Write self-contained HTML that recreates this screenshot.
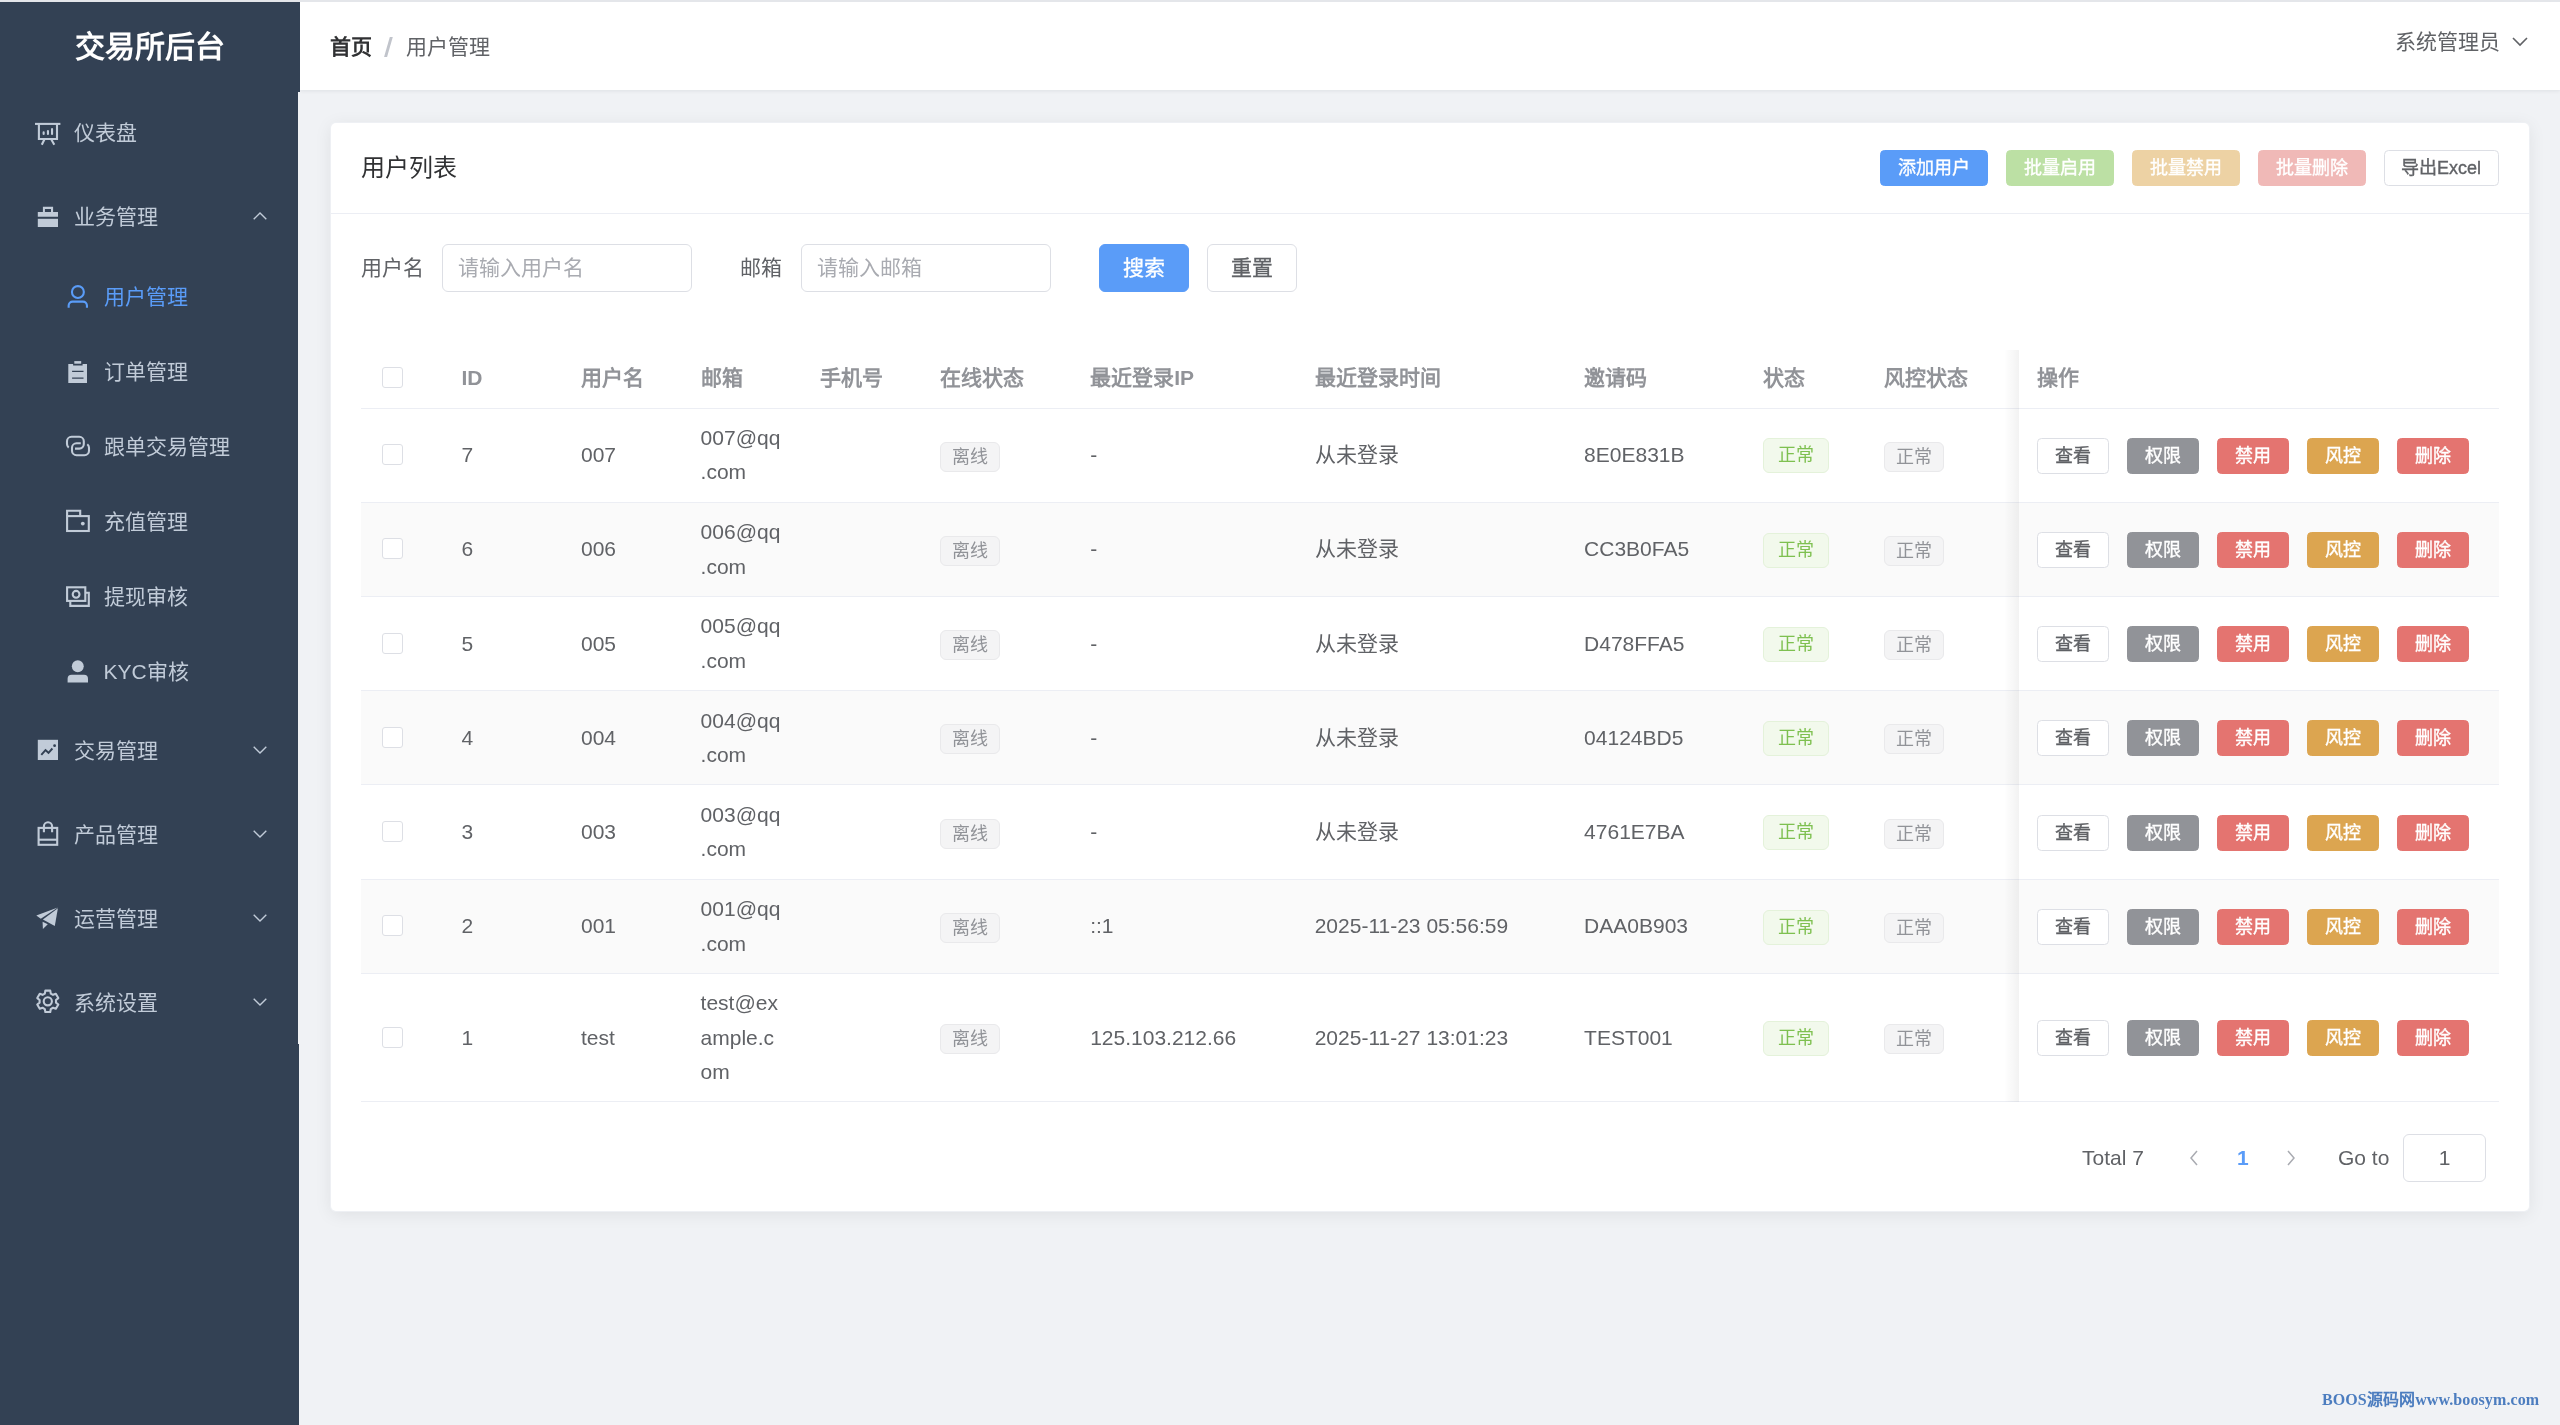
<!DOCTYPE html>
<html lang="zh-CN"><head><meta charset="utf-8"><title>用户管理</title>
<style>
*{box-sizing:border-box;margin:0;padding:0}
html,body{width:2560px;height:1425px;overflow:hidden}
.header,.side,.card,.wm{will-change:transform}
body{background:#f0f2f5;font-family:"Liberation Sans",sans-serif;position:relative;color:#606266;-webkit-font-smoothing:antialiased}
.topline{position:absolute;left:0;top:0;width:2560px;height:2px;background:#e4e6ea;z-index:50}
.side{position:absolute;left:0;top:0;width:298px;height:1044px;background:#334154;z-index:5}
.side-below{position:absolute;left:0;top:1044px;width:299px;height:381px;background:#334154;z-index:5}
.logo{position:absolute;left:0;top:2px;width:300px;height:90px;line-height:90px;text-align:center;color:#ffffff;font-size:30px;font-weight:bold;background:#334154}
.mi{position:absolute;left:0;width:298px;color:#c1cbd8;font-size:21px;display:flex;align-items:center;padding-left:30px}
.mi.child{padding-left:60px}
.mi.active{color:#5a9cf8}
.mi .mt{position:relative;top:-1px}
.mi .ico{width:36px;height:27px;position:relative;margin-right:7.5px;flex:none}
.mi .ico svg{position:absolute;left:0;top:-4.5px}
.mi .arr{position:absolute;left:252.5px;top:50%;margin-top:-4px}
.header{position:absolute;left:300px;top:0;width:2260px;height:90px;background:#ffffff;box-shadow:0 1px 4px rgba(4,21,39,.08);z-index:3}
.bc{position:absolute;left:30px;top:1.5px;height:90px;line-height:90px;font-size:21px}
.bc1{color:#303133;font-weight:bold}
.bcsep{display:inline-block;width:3px;height:19.5px;background:#c1c4cb;margin:0 16px 0 15px;transform:skewX(-16deg);vertical-align:middle;position:relative;top:-1.5px}
.bc2{color:#606266}
.user{position:absolute;right:32px;top:0;height:84px;line-height:84px;font-size:21px;color:#606266;display:flex;align-items:center}
.user svg{margin-left:12px}
.card{position:absolute;left:331px;top:122.5px;width:2197.5px;height:1088px;background:#ffffff;border-radius:5px;box-shadow:0 0 0 1px #eef0f4,0 3px 18px rgba(0,0,0,.08)}
.card-h{position:absolute;left:0;top:0;width:100%;height:91px;border-bottom:1px solid #eceef4}
.title{position:absolute;left:30px;top:0;line-height:90px;font-size:24px;color:#303133}
.hbtns{position:absolute;right:30px;top:26.5px;height:36px;display:flex}
.hb{-webkit-text-stroke:0.35px currentColor;display:inline-block;height:36px;line-height:34px;padding:0 0;width:108px;text-align:center;font-size:18px;border-radius:4.5px;border:1px solid transparent;color:#ffffff;margin-left:18px}
.hb-p{background:#5a9cf8;border-color:#5a9cf8}
.hb-s{background:#bce0a4;border-color:#bce0a4}
.hb-w{background:#edd2a4;border-color:#edd2a4}
.hb-d{background:#f0b9b7;border-color:#f0b9b7}
.hb-def{background:#ffffff;border-color:#dddfe5;color:#606266;width:115px}
.form{position:absolute;left:0;top:121px;width:100%;height:48px}
.lbl{position:absolute;top:0;line-height:48px;font-size:21px;color:#606266}
.inp{position:absolute;top:0;height:48px;border:1px solid #dddfe5;border-radius:6px;padding-left:14.5px;line-height:46px;font-size:21px;color:#a9abb1}
.sbtn{-webkit-text-stroke:0.35px currentColor;position:absolute;top:0;height:48px;width:90px;line-height:46px;text-align:center;font-size:21px;border-radius:6px;border:1px solid #dddfe5}
.sbtn-p{background:#5a9cf8;border-color:#5a9cf8;color:#ffffff}
.sbtn-def{background:#ffffff;color:#606266}
.table{position:absolute;left:30px;top:226.5px;width:2137.5px}
.row{position:absolute;left:0;width:2137.5px;border-bottom:1px solid #eceef4;background:#ffffff}
.row.stripe{background:#fafafa}
.row.head{color:#919398;font-weight:bold}
.c{position:absolute;top:0;height:100%;display:flex;align-items:center;padding-top:0.75px}
.row.head .c{padding-top:0}
.cell{padding:0 18px;line-height:34.5px;font-size:21px;white-space:nowrap}
.cell.sel{padding-left:21px}
.cb{display:inline-block;width:21px;height:21px;border:1px solid #dddfe5;border-radius:3px;background:#ffffff;vertical-align:middle;position:relative;top:-2px}
.tag{display:inline-block;font-size:18px;border:1px solid;border-radius:6px;text-align:center;vertical-align:middle}
.tag-sm{height:30px;line-height:28px;padding:0 11px}
.tag-success{height:35px;line-height:33px;padding:0 13.8px;color:#7ec050;background:#f2f9ec;border-color:#e4f2da}
.tag-info{color:#919398;background:#f4f4f5;border-color:#e9e9eb}
.btn{display:inline-block;width:72px;height:36px;line-height:34px;text-align:center;font-size:18px;border-radius:4.5px;border:1px solid;margin-right:18px;vertical-align:middle;-webkit-text-stroke:0.35px currentColor}
.b-def{background:#ffffff;border-color:#dddfe5;color:#606266}
.b-info{background:#919398;border-color:#919398;color:#ffffff}
.b-danger{background:#e47470;border-color:#e47470;color:#ffffff}
.b-warn{background:#dca550;border-color:#dca550;color:#ffffff}
.fixshadow{position:absolute;top:0;width:15px;background:linear-gradient(to right,rgba(0,0,0,0),rgba(0,0,0,.05))}
.pager{position:absolute;left:0;top:1010.5px;width:100%;height:48px}
.total{position:absolute;left:1751px;line-height:48px;font-size:21px;color:#606266}
.pv{position:absolute;left:1858px;top:16px}
.nx{position:absolute;left:1955px;top:16px}
.pnum{position:absolute;left:1906px;line-height:48px;font-size:21px;color:#5a9cf8;font-weight:bold}
.goto{position:absolute;left:2007px;line-height:48px;font-size:21px;color:#606266}
.ginp{position:absolute;left:2072px;top:0;width:83px;height:48px;border:1px solid #dddfe5;border-radius:6px;text-align:center;line-height:46px;font-size:21px;color:#606266}
.wm{position:absolute;left:2322px;top:1385.5px;font-family:"Liberation Serif",serif;font-weight:bold;font-size:16px;color:#4c7dbf;letter-spacing:0.1px}

</style></head><body>
<div class="topline"></div>
<div class="side">
  <div class="logo">交易所后台</div>
  <div class="mi" style="top:90px;height:84px"><span class="ico"><svg width="36" height="36" viewBox="0 0 36 36"><g fill="none" stroke="#c1cbd8" stroke-width="2.1"><path d="M5 9.9H30.4"/><path d="M8.9 9.9V25H27V9.9"/><path d="M14.5 25.3L11.8 30.8M21.2 25.3L24.3 30.8"/></g><g stroke="#c1cbd8" stroke-width="2.1" stroke-linecap="round"><path d="M13.65 18.25V19.95M17.95 16.95V19.95M22.05 15.15V19.95"/></g></svg></span><span class="mt">仪表盘</span></div><div class="mi" style="top:174px;height:84px"><span class="ico"><svg width="36" height="36" viewBox="0 0 36 36"><path fill="#c1cbd8" fill-rule="evenodd" d="M12.9 8.8H23.1V14H28V18.8H7.8V14H12.9ZM14.9 11.1V14H21V11.1Z"/><rect x="7.8" y="20.8" width="20.2" height="8.2" fill="#c1cbd8"/></svg></span><span class="mt">业务管理</span><svg class="arr" viewBox="0 0 14 8" width="14" height="8"><path d="M0.7 7.3L7 1l6.3 6.3" fill="none" stroke="#c1cbd8" stroke-width="1.4"/></svg></div><div class="mi child active" style="top:258px;height:75px"><span class="ico"><svg width="36" height="36" viewBox="0 0 36 36"><g fill="none" stroke="#5a9cf8" stroke-width="2.1"><circle cx="17.9" cy="14.05" r="5.95"/><path d="M8.65 29.8V27.6a4 4 0 0 1 4-4H22.95a4 4 0 0 1 4 4V29.8"/></g></svg></span><span class="mt">用户管理</span></div><div class="mi child" style="top:333px;height:75px"><span class="ico"><svg width="36" height="36" viewBox="0 0 36 36"><path fill="#c1cbd8" d="M14.3 8.1H21.2V10.7H14.3Z"/><path fill="#c1cbd8" fill-rule="evenodd" d="M8.3 10.9H13.1V12.4H22.6V10.9H27V29.9H8.3ZM12.1 17.7V19H23.5V17.7ZM12.1 24.4V25.8H23.5V24.4Z"/></svg></span><span class="mt">订单管理</span></div><div class="mi child" style="top:408px;height:75px"><span class="ico"><svg width="36" height="36" viewBox="0 0 36 36"><g fill="none" stroke="#c1cbd8" stroke-width="2.1"><path d="M8.7 19.6A4.5 4.5 0 0 1 7 16.1V13.3A4.5 4.5 0 0 1 11.5 8.8H19.3A4.5 4.5 0 0 1 23.8 13.3V16.1A4.5 4.5 0 0 1 19.3 20.6H15"/><path d="M20.8 15.3H16.5A4.5 4.5 0 0 0 12 19.8V22.7A4.5 4.5 0 0 0 16.5 27.2H24.5A4.5 4.5 0 0 0 29 22.7V19.8A4.5 4.5 0 0 0 27.3 16.3"/></g></svg></span><span class="mt">跟单交易管理</span></div><div class="mi child" style="top:483px;height:75px"><span class="ico"><svg width="36" height="36" viewBox="0 0 36 36"><g fill="none" stroke="#c1cbd8" stroke-width="2.1"><path d="M7.1 13.1V7.8H20.2V13.1"/><rect x="7.1" y="13.1" width="21.7" height="14.9"/></g><circle cx="22.8" cy="20.6" r="1.9" fill="#c1cbd8"/></svg></span><span class="mt">充值管理</span></div><div class="mi child" style="top:558px;height:75px"><span class="ico"><svg width="36" height="36" viewBox="0 0 36 36"><g fill="none" stroke="#c1cbd8" stroke-width="2.1"><rect x="7.1" y="9.3" width="18.2" height="13.6"/><circle cx="16.1" cy="16.3" r="3.4"/><path d="M10.3 22.9V27.9H28.8V14.8H25.3"/></g></svg></span><span class="mt">提现审核</span></div><div class="mi child" style="top:633px;height:75px"><span class="ico"><svg width="36" height="36" viewBox="0 0 36 36"><circle cx="17.8" cy="13.25" r="5.95" fill="#c1cbd8"/><path fill="#c1cbd8" d="M7.6 29.6V25.7a4 4 0 0 1 4-4H24a4 4 0 0 1 4 4V29.6Z"/></svg></span><span class="mt">KYC审核</span></div><div class="mi" style="top:708px;height:84px"><span class="ico"><svg width="36" height="36" viewBox="0 0 36 36"><rect x="7.8" y="7.8" width="20.2" height="20.2" fill="#c1cbd8"/><path d="M11.3 22.8L15.5 18L18.5 20.8L22.4 16.5" fill="none" stroke="#334154" stroke-width="1.9"/><circle cx="24.6" cy="13.7" r="1.4" fill="#334154"/></svg></span><span class="mt">交易管理</span><svg class="arr" viewBox="0 0 14 8" width="14" height="8"><path d="M0.7 0.7L7 7l6.3-6.3" fill="none" stroke="#c1cbd8" stroke-width="1.4"/></svg></div><div class="mi" style="top:792px;height:84px"><span class="ico"><svg width="36" height="36" viewBox="0 0 36 36"><g fill="none" stroke="#c1cbd8" stroke-width="2.1"><rect x="8.6" y="11.9" width="18.6" height="16.9"/><path d="M8.6 23.7H27.2"/><path d="M13.9 16.2V10.3A4.1 4.1 0 0 1 22.1 10.3V16.2"/></g></svg></span><span class="mt">产品管理</span><svg class="arr" viewBox="0 0 14 8" width="14" height="8"><path d="M0.7 0.7L7 7l6.3-6.3" fill="none" stroke="#c1cbd8" stroke-width="1.4"/></svg></div><div class="mi" style="top:876px;height:84px"><span class="ico"><svg width="36" height="36" viewBox="0 0 36 36"><path fill="#c1cbd8" d="M6.3 15.6L27.8 7.5L10.8 18.8Z"/><path fill="#c1cbd8" d="M12.9 19.5L27.9 8.3L24.8 26Z"/><path fill="#c1cbd8" d="M12.6 21.8L17.8 24.3L12.9 29Z"/></svg></span><span class="mt">运营管理</span><svg class="arr" viewBox="0 0 14 8" width="14" height="8"><path d="M0.7 0.7L7 7l6.3-6.3" fill="none" stroke="#c1cbd8" stroke-width="1.4"/></svg></div><div class="mi" style="top:960px;height:84px"><span class="ico"><svg width="36" height="36" viewBox="0 0 36 36"><g fill="none" stroke="#c1cbd8" stroke-width="2.1" stroke-linejoin="round"><path d="M15.33 6.58 L20.27 6.58 L20.77 9.55 L23.02 10.85 L25.84 9.80 L28.32 14.08 L26.00 16.00 L26.00 18.60 L28.32 20.52 L25.84 24.80 L23.02 23.75 L20.77 25.05 L20.27 28.02 L15.33 28.02 L14.83 25.05 L12.58 23.75 L9.76 24.80 L7.28 20.52 L9.60 18.60 L9.60 16.00 L7.28 14.08 L9.76 9.80 L12.58 10.85 L14.83 9.55Z"/><circle cx="17.8" cy="17.3" r="4.1"/></g></svg></span><span class="mt">系统设置</span><svg class="arr" viewBox="0 0 14 8" width="14" height="8"><path d="M0.7 0.7L7 7l6.3-6.3" fill="none" stroke="#c1cbd8" stroke-width="1.4"/></svg></div>
</div>
<div class="side-below"></div>
<div class="header">
  <div class="bc"><span class="bc1">首页</span><span class="bcsep"></span><span class="bc2">用户管理</span></div>
  <div class="user">系统管理员<svg viewBox="0 0 16 10" width="16" height="10"><path d="M1 1l7 7 7-7" fill="none" stroke="#606266" stroke-width="1.6"/></svg></div>
</div>
<div class="card">
  <div class="card-h">
    <div class="title">用户列表</div>
    <div class="hbtns"><span class="hb hb-p">添加用户</span><span class="hb hb-s">批量启用</span><span class="hb hb-w">批量禁用</span><span class="hb hb-d">批量删除</span><span class="hb hb-def">导出Excel</span></div>
  </div>
  <div class="form">
    <span class="lbl" style="left:30px">用户名</span>
    <div class="inp" style="left:111px;width:250px"><span>请输入用户名</span></div>
    <span class="lbl" style="left:409px">邮箱</span>
    <div class="inp" style="left:470px;width:250px"><span>请输入邮箱</span></div>
    <span class="sbtn sbtn-p" style="left:768px">搜索</span>
    <span class="sbtn sbtn-def" style="left:876px">重置</span>
  </div>
  <div class="table" style="height:752.7px">
    <div class="row head" style="top:0;height:59px"><div class="c" style="left:0.0px;width:82.4px;"><div class="cell sel"><span class="cb"></span></div></div><div class="c" style="left:82.4px;width:119.6px;"><div class="cell">ID</div></div><div class="c" style="left:202.0px;width:119.6px;"><div class="cell">用户名</div></div><div class="c" style="left:321.6px;width:119.7px;"><div class="cell">邮箱</div></div><div class="c" style="left:441.3px;width:119.9px;"><div class="cell">手机号</div></div><div class="c" style="left:561.2px;width:150.0px;"><div class="cell">在线状态</div></div><div class="c" style="left:711.2px;width:224.5px;"><div class="cell">最近登录IP</div></div><div class="c" style="left:935.7px;width:269.4px;"><div class="cell">最近登录时间</div></div><div class="c" style="left:1205.1px;width:179.3px;"><div class="cell">邀请码</div></div><div class="c" style="left:1384.4px;width:120.1px;"><div class="cell">状态</div></div><div class="c" style="left:1504.5px;width:153.5px;"><div class="cell">风控状态</div></div><div class="c" style="left:1658.0px;width:479.5px;"><div class="cell">操作</div></div></div>
    <div class="row" style="top:59.0px;height:94.2px"><div class="c" style="left:0.0px;width:82.4px;"><div class="cell sel"><span class="cb"></span></div></div><div class="c" style="left:82.4px;width:119.6px;"><div class="cell">7</div></div><div class="c" style="left:202.0px;width:119.6px;"><div class="cell">007</div></div><div class="c" style="left:321.6px;width:119.7px;"><div class="cell">007@qq<br>.com</div></div><div class="c" style="left:441.3px;width:119.9px;"><div class="cell"></div></div><div class="c" style="left:561.2px;width:150.0px;"><div class="cell"><span class="tag tag-info tag-sm">离线</span></div></div><div class="c" style="left:711.2px;width:224.5px;"><div class="cell">-</div></div><div class="c" style="left:935.7px;width:269.4px;"><div class="cell">从未登录</div></div><div class="c" style="left:1205.1px;width:179.3px;"><div class="cell">8E0E831B</div></div><div class="c" style="left:1384.4px;width:120.1px;"><div class="cell"><span class="tag tag-success">正常</span></div></div><div class="c" style="left:1504.5px;width:153.5px;"><div class="cell"><span class="tag tag-info tag-sm">正常</span></div></div><div class="c" style="left:1658.0px;width:479.5px;"><div class="cell"><span class="btn b-def">查看</span><span class="btn b-info">权限</span><span class="btn b-danger">禁用</span><span class="btn b-warn">风控</span><span class="btn b-danger">删除</span></div></div></div><div class="row stripe" style="top:153.2px;height:94.2px"><div class="c" style="left:0.0px;width:82.4px;"><div class="cell sel"><span class="cb"></span></div></div><div class="c" style="left:82.4px;width:119.6px;"><div class="cell">6</div></div><div class="c" style="left:202.0px;width:119.6px;"><div class="cell">006</div></div><div class="c" style="left:321.6px;width:119.7px;"><div class="cell">006@qq<br>.com</div></div><div class="c" style="left:441.3px;width:119.9px;"><div class="cell"></div></div><div class="c" style="left:561.2px;width:150.0px;"><div class="cell"><span class="tag tag-info tag-sm">离线</span></div></div><div class="c" style="left:711.2px;width:224.5px;"><div class="cell">-</div></div><div class="c" style="left:935.7px;width:269.4px;"><div class="cell">从未登录</div></div><div class="c" style="left:1205.1px;width:179.3px;"><div class="cell">CC3B0FA5</div></div><div class="c" style="left:1384.4px;width:120.1px;"><div class="cell"><span class="tag tag-success">正常</span></div></div><div class="c" style="left:1504.5px;width:153.5px;"><div class="cell"><span class="tag tag-info tag-sm">正常</span></div></div><div class="c" style="left:1658.0px;width:479.5px;"><div class="cell"><span class="btn b-def">查看</span><span class="btn b-info">权限</span><span class="btn b-danger">禁用</span><span class="btn b-warn">风控</span><span class="btn b-danger">删除</span></div></div></div><div class="row" style="top:247.5px;height:94.2px"><div class="c" style="left:0.0px;width:82.4px;"><div class="cell sel"><span class="cb"></span></div></div><div class="c" style="left:82.4px;width:119.6px;"><div class="cell">5</div></div><div class="c" style="left:202.0px;width:119.6px;"><div class="cell">005</div></div><div class="c" style="left:321.6px;width:119.7px;"><div class="cell">005@qq<br>.com</div></div><div class="c" style="left:441.3px;width:119.9px;"><div class="cell"></div></div><div class="c" style="left:561.2px;width:150.0px;"><div class="cell"><span class="tag tag-info tag-sm">离线</span></div></div><div class="c" style="left:711.2px;width:224.5px;"><div class="cell">-</div></div><div class="c" style="left:935.7px;width:269.4px;"><div class="cell">从未登录</div></div><div class="c" style="left:1205.1px;width:179.3px;"><div class="cell">D478FFA5</div></div><div class="c" style="left:1384.4px;width:120.1px;"><div class="cell"><span class="tag tag-success">正常</span></div></div><div class="c" style="left:1504.5px;width:153.5px;"><div class="cell"><span class="tag tag-info tag-sm">正常</span></div></div><div class="c" style="left:1658.0px;width:479.5px;"><div class="cell"><span class="btn b-def">查看</span><span class="btn b-info">权限</span><span class="btn b-danger">禁用</span><span class="btn b-warn">风控</span><span class="btn b-danger">删除</span></div></div></div><div class="row stripe" style="top:341.8px;height:94.2px"><div class="c" style="left:0.0px;width:82.4px;"><div class="cell sel"><span class="cb"></span></div></div><div class="c" style="left:82.4px;width:119.6px;"><div class="cell">4</div></div><div class="c" style="left:202.0px;width:119.6px;"><div class="cell">004</div></div><div class="c" style="left:321.6px;width:119.7px;"><div class="cell">004@qq<br>.com</div></div><div class="c" style="left:441.3px;width:119.9px;"><div class="cell"></div></div><div class="c" style="left:561.2px;width:150.0px;"><div class="cell"><span class="tag tag-info tag-sm">离线</span></div></div><div class="c" style="left:711.2px;width:224.5px;"><div class="cell">-</div></div><div class="c" style="left:935.7px;width:269.4px;"><div class="cell">从未登录</div></div><div class="c" style="left:1205.1px;width:179.3px;"><div class="cell">04124BD5</div></div><div class="c" style="left:1384.4px;width:120.1px;"><div class="cell"><span class="tag tag-success">正常</span></div></div><div class="c" style="left:1504.5px;width:153.5px;"><div class="cell"><span class="tag tag-info tag-sm">正常</span></div></div><div class="c" style="left:1658.0px;width:479.5px;"><div class="cell"><span class="btn b-def">查看</span><span class="btn b-info">权限</span><span class="btn b-danger">禁用</span><span class="btn b-warn">风控</span><span class="btn b-danger">删除</span></div></div></div><div class="row" style="top:436.0px;height:94.2px"><div class="c" style="left:0.0px;width:82.4px;"><div class="cell sel"><span class="cb"></span></div></div><div class="c" style="left:82.4px;width:119.6px;"><div class="cell">3</div></div><div class="c" style="left:202.0px;width:119.6px;"><div class="cell">003</div></div><div class="c" style="left:321.6px;width:119.7px;"><div class="cell">003@qq<br>.com</div></div><div class="c" style="left:441.3px;width:119.9px;"><div class="cell"></div></div><div class="c" style="left:561.2px;width:150.0px;"><div class="cell"><span class="tag tag-info tag-sm">离线</span></div></div><div class="c" style="left:711.2px;width:224.5px;"><div class="cell">-</div></div><div class="c" style="left:935.7px;width:269.4px;"><div class="cell">从未登录</div></div><div class="c" style="left:1205.1px;width:179.3px;"><div class="cell">4761E7BA</div></div><div class="c" style="left:1384.4px;width:120.1px;"><div class="cell"><span class="tag tag-success">正常</span></div></div><div class="c" style="left:1504.5px;width:153.5px;"><div class="cell"><span class="tag tag-info tag-sm">正常</span></div></div><div class="c" style="left:1658.0px;width:479.5px;"><div class="cell"><span class="btn b-def">查看</span><span class="btn b-info">权限</span><span class="btn b-danger">禁用</span><span class="btn b-warn">风控</span><span class="btn b-danger">删除</span></div></div></div><div class="row stripe" style="top:530.2px;height:94.2px"><div class="c" style="left:0.0px;width:82.4px;"><div class="cell sel"><span class="cb"></span></div></div><div class="c" style="left:82.4px;width:119.6px;"><div class="cell">2</div></div><div class="c" style="left:202.0px;width:119.6px;"><div class="cell">001</div></div><div class="c" style="left:321.6px;width:119.7px;"><div class="cell">001@qq<br>.com</div></div><div class="c" style="left:441.3px;width:119.9px;"><div class="cell"></div></div><div class="c" style="left:561.2px;width:150.0px;"><div class="cell"><span class="tag tag-info tag-sm">离线</span></div></div><div class="c" style="left:711.2px;width:224.5px;"><div class="cell">::1</div></div><div class="c" style="left:935.7px;width:269.4px;"><div class="cell">2025-11-23 05:56:59</div></div><div class="c" style="left:1205.1px;width:179.3px;"><div class="cell">DAA0B903</div></div><div class="c" style="left:1384.4px;width:120.1px;"><div class="cell"><span class="tag tag-success">正常</span></div></div><div class="c" style="left:1504.5px;width:153.5px;"><div class="cell"><span class="tag tag-info tag-sm">正常</span></div></div><div class="c" style="left:1658.0px;width:479.5px;"><div class="cell"><span class="btn b-def">查看</span><span class="btn b-info">权限</span><span class="btn b-danger">禁用</span><span class="btn b-warn">风控</span><span class="btn b-danger">删除</span></div></div></div><div class="row" style="top:624.5px;height:128.2px"><div class="c" style="left:0.0px;width:82.4px;"><div class="cell sel"><span class="cb"></span></div></div><div class="c" style="left:82.4px;width:119.6px;"><div class="cell">1</div></div><div class="c" style="left:202.0px;width:119.6px;"><div class="cell">test</div></div><div class="c" style="left:321.6px;width:119.7px;"><div class="cell">test@ex<br>ample.c<br>om</div></div><div class="c" style="left:441.3px;width:119.9px;"><div class="cell"></div></div><div class="c" style="left:561.2px;width:150.0px;"><div class="cell"><span class="tag tag-info tag-sm">离线</span></div></div><div class="c" style="left:711.2px;width:224.5px;"><div class="cell">125.103.212.66</div></div><div class="c" style="left:935.7px;width:269.4px;"><div class="cell">2025-11-27 13:01:23</div></div><div class="c" style="left:1205.1px;width:179.3px;"><div class="cell">TEST001</div></div><div class="c" style="left:1384.4px;width:120.1px;"><div class="cell"><span class="tag tag-success">正常</span></div></div><div class="c" style="left:1504.5px;width:153.5px;"><div class="cell"><span class="tag tag-info tag-sm">正常</span></div></div><div class="c" style="left:1658.0px;width:479.5px;"><div class="cell"><span class="btn b-def">查看</span><span class="btn b-info">权限</span><span class="btn b-danger">禁用</span><span class="btn b-warn">风控</span><span class="btn b-danger">删除</span></div></div></div>
    <div class="fixshadow" style="left:1643.0px;height:752.7px"></div>
  </div>
  <div class="pager">
    <span class="total">Total 7</span>
    <svg class="pv" viewBox="0 0 10 16" width="10" height="16"><path d="M8 1L2 8l6 7" fill="none" stroke="#a9abb1" stroke-width="1.5"/></svg>
    <span class="pnum">1</span>
    <svg class="nx" viewBox="0 0 10 16" width="10" height="16"><path d="M2 1l6 7-6 7" fill="none" stroke="#a9abb1" stroke-width="1.5"/></svg>
    <span class="goto">Go to</span>
    <div class="ginp">1</div>
  </div>
</div>
<div class="wm">BOOS源码网www.boosym.com</div>
</body></html>
